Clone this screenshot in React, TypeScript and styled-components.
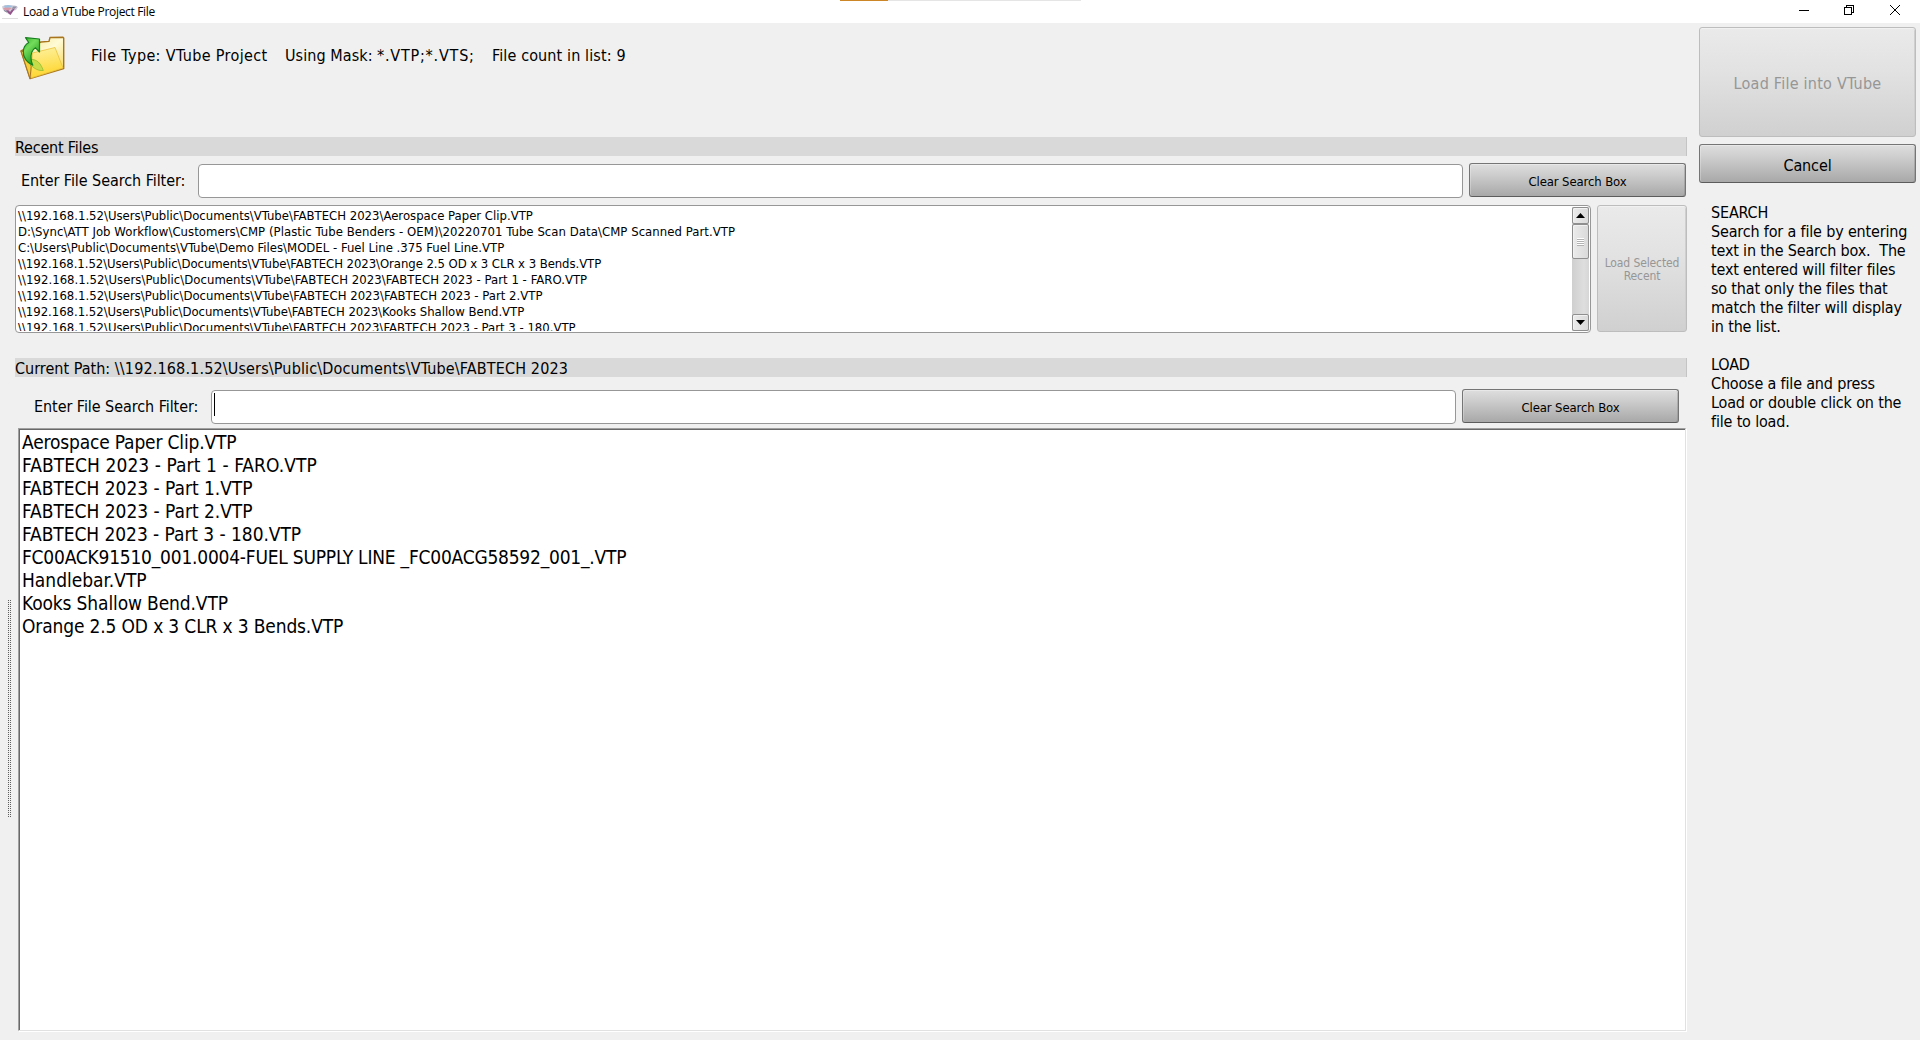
import React from "react";
import styled, { createGlobalStyle, css } from "styled-components";

const GlobalStyle = createGlobalStyle`
  * { box-sizing: border-box; }
  body {
    margin: 0;
    background: #f0f0f0;
    color: #000;
    font-family: "DejaVu Sans Condensed", "DejaVu Sans", sans-serif;
    font-size: 16px;
    overflow: hidden;
  }
`;

const Window = styled.div`
  width: 1920px;
  height: 1040px;
  display: flex;
  flex-direction: column;
  background: #f0f0f0;
`;

const TitleBar = styled.header`
  position: relative;
  height: 23px;
  flex: none;
  display: flex;
  align-items: center;
  justify-content: space-between;
  background: #fff;
`;

const TitleGroup = styled.div`
  display: flex;
  align-items: center;
  gap: 5px;
  padding-left: 2px;
`;

const Title = styled.span`
  font-family: "Open Sans", sans-serif;
  font-size: 12px;
  line-height: 18px;
  letter-spacing: -0.32px;
  padding-top: 1px;
`;

const Progress = styled.div`
  position: absolute;
  top: 0;
  left: 840px;
  width: 241px;
  height: 1px;
  background: linear-gradient(to right, #cc8527 48px, #e5e5e5 48px);
`;

const WindowControls = styled.div`
  display: flex;
  gap: 35px;
  padding: 0 19px 3px 0;
`;

const Body = styled.main`
  flex: 1;
  display: flex;
  min-height: 0;
`;

const SplitterRail = styled.div`
  width: 15px;
  flex: none;
  padding: 577px 0 0 8px;
`;

const Grip = styled.div`
  width: 3px;
  height: 217px;
  background: repeating-linear-gradient(to bottom, transparent 0 1px, #f0f0f0 1px 2px),
    linear-gradient(to right, #5e5e5e 1px, #f0f0f0 1px 2px, #5e5e5e 2px);
`;

const MainColumn = styled.section`
  width: 1672px;
  flex: none;
  display: flex;
  flex-direction: column;
`;

const InfoBar = styled.div`
  height: 114px;
  flex: none;
  display: flex;
  align-items: flex-start;
  padding: 13px 0 0 4px;
`;

const InfoLine = styled.div`
  display: flex;
  padding: 10px 0 0 26px;
  line-height: 19px;
  white-space: pre;
`;

const InfoItem = styled.span<{ $width: number; $spacing: number }>`
  width: ${(p) => p.$width}px;
  letter-spacing: ${(p) => p.$spacing}px;
`;

const SectionHeading = styled.h2<{ $spacing: number }>`
  margin: 0;
  height: 19px;
  flex: none;
  padding-top: 1px;
  font-size: 16px;
  font-weight: 400;
  line-height: 19px;
  letter-spacing: ${(p) => p.$spacing}px;
  background: #d9d9d9;
  border-right: 1px solid #c4c4c4;
  white-space: pre;
`;

const PathValue = styled.span`
  letter-spacing: 0.15px;
`;

const FilterRow = styled.div<{ $indent: number; $top: number; $right: number }>`
  display: flex;
  flex: none;
  height: 35px;
  margin: ${(p) => p.$top}px ${(p) => p.$right}px 0 ${(p) => p.$indent}px;
`;

const FilterLabel = styled.label`
  width: 178px;
  flex: none;
  line-height: 19px;
  padding: 8px 0 0 1px;
  letter-spacing: -0.06px;
`;

const FilterInput = styled.div`
  flex: 1;
  height: 34px;
  margin: 1px 6px 0 0;
  background: #fff;
  border: 1px solid #979797;
  border-radius: 4px;
  padding: 2px;
`;

const Caret = styled.div`
  width: 1px;
  height: 23px;
  background: #000;
`;

const raised = css`
  border: 1px solid #757575;
  border-bottom-color: #5c5c5c;
  border-radius: 3px;
  color: #000;
  background: linear-gradient(to bottom, #dedede, #cfcfcf 30%, #a8a8a8);
  box-shadow: inset 0 1px 0 #e8e8e8, inset 1px 0 0 rgba(255, 255, 255, 0.25),
    inset -1px 0 0 rgba(120, 120, 120, 0.35);
`;

const flat = css`
  border: 1px solid #bdbdbd;
  border-radius: 3px;
  color: #969696;
  background: linear-gradient(to bottom, #eaeaea, #e2e2e2 40%, #d0d0d0);
  box-shadow: inset 0 1px 0 #f1f1f1, inset -1px 0 0 #cfcfcf;
`;

const PushButton = styled.button<{ $size: number; $w: number; $h: number; $pad?: number; $ls?: number }>`
  flex: none;
  width: ${(p) => p.$w}px;
  height: ${(p) => p.$h}px;
  padding: ${(p) => p.$pad ?? 0}px 0 0;
  font-family: inherit;
  font-size: ${(p) => p.$size}px;
  line-height: ${(p) => (p.$size > 14 ? 19 : 13)}px;
  letter-spacing: ${(p) => p.$ls ?? -0.11}px;
  ${raised}
  &:disabled {
    ${flat}
  }
`;

const RecentRow = styled.div`
  display: flex;
  flex: none;
  gap: 6px;
  margin-top: 7px;
`;

const RecentBox = styled.div`
  width: 1576px;
  height: 128px;
  flex: none;
  display: flex;
  background: #fff;
  border: 1px solid #979797;
  border-radius: 4px;
  padding: 1px;
`;

const RecentList = styled.ul`
  flex: 1;
  height: 124px;
  margin: 0;
  padding: 0 0 0 1px;
  overflow: hidden;
  list-style: none;
  font-size: 13px;
`;

const RecentItem = styled.li<{ $spacing: number }>`
  height: 16px;
  line-height: 17px;
  white-space: pre;
  letter-spacing: ${(p) => p.$spacing}px;
`;

const ScrollBar = styled.div`
  width: 17px;
  height: 124px;
  display: flex;
  flex-direction: column;
  background: linear-gradient(to right, #cfcfcf, #dedede 70%, #d6d6d6);
`;

const ScrollPart = styled.div<{ $h: number }>`
  height: ${(p) => p.$h}px;
  display: flex;
  align-items: center;
  justify-content: center;
  background: linear-gradient(to right, #ebebeb, #dadada);
  border: 1px solid #8f8f8f;
  border-radius: 2px;
  box-shadow: inset 1px 1px 0 #f2f2f2;
`;

const ScrollTrack = styled.div`
  flex: 1;
`;

const CurrentPath = styled.div`
  margin-top: 25px;
`;

const FileBox = styled.ul`
  flex: 1;
  margin: 4px 1px 9px 3px;
  padding: 2px 0 0 3px;
  list-style: none;
  background: #fff;
  border: 1px solid;
  border-color: #a0a0a0 #e1e1e1 #e1e1e1 #a0a0a0;
  box-shadow: inset 1px 1px 0 #696969, 1px 1px 0 #fff;
  font-size: 19px;
`;

const FileItem = styled.li<{ $spacing: number }>`
  height: 23px;
  line-height: 23px;
  white-space: pre;
  letter-spacing: ${(p) => p.$spacing}px;
`;

const SidePanel = styled.aside`
  display: flex;
  flex-direction: column;
  gap: 7px;
  padding: 4px 0 0 12px;
`;

const HelpText = styled.div`
  display: flex;
  flex-direction: column;
  gap: 19px;
  padding: 13px 0 0 12px;
`;

const HelpBlock = styled.div`
  line-height: 19px;
  white-space: pre;
`;

const HelpLine = styled.div`
  letter-spacing: -0.17px;
`;

const AppIcon = () => (
  <svg width="16" height="16" viewBox="0 0 16 16">
    <path d="M0 2.500 3 1l10 .5 3 1.500-2 3-3 1-2.500 4L5 9 1 6Z" fill="#cfcbd8" />
    <path d="m2 2 4-1 5 1-3 1.500-5 .5Z" fill="#9cc0de" />
    <path d="m11 2.500 4 0-2 2-3 .5Z" fill="#8d93a3" />
    <path d="m1 4 5-.5 4 .5-3 2-4 .5Z" fill="#d99aa8" />
    <path d="m4 6 3 .5L8 8l2-2.500 3-1L8.500 11 6 9Z" fill="#96548c" />
    <path d="M2 6.500 5 8" stroke="#7c8494" />
    <path d="M0 14.500h16" stroke="#dedede" />
  </svg>
);

const FolderIcon = () => (
  <svg width="46" height="44" viewBox="0 0 46 44">
    <defs>
      <linearGradient id="folderBack" x1="0" y1="0" x2="1" y2="1">
        <stop offset="0" stopColor="#f6e288" />
        <stop offset=".5" stopColor="#fffbd6" />
        <stop offset="1" stopColor="#f6cf3a" />
      </linearGradient>
      <linearGradient id="folderFront" x1=".4" y1="0" x2=".6" y2="1">
        <stop offset="0" stopColor="#fdf09a" />
        <stop offset="1" stopColor="#ffd426" />
      </linearGradient>
      <linearGradient id="arrowFill" x1="0" y1="0" x2=".6" y2="1">
        <stop offset="0" stopColor="#2fae25" />
        <stop offset=".4" stopColor="#74dc5c" />
        <stop offset="1" stopColor="#1a9418" />
      </linearGradient>
    </defs>
    <path d="M11 42.500 2 15l4-2 16-7 8-.6 1-3.900 13-.2.7.7V32.500L11 42.500Z" fill="url(#folderBack)" stroke="#a8741c" strokeWidth="1.400" strokeLinejoin="round" />
    <path d="m12 42 1.500-25L36 11.500 44 32 12 42Z" fill="url(#folderFront)" stroke="#eac23c" strokeWidth=".8" strokeLinejoin="round" />
    <path d="m2 15 9 27.500 1.200-12L6 16Z" fill="#f5cd3a" stroke="#a8741c" strokeLinejoin="round" />
    <path d="M8.500 24c6-1.500 12-.5 15.800 10.500-6 .6-11.800-3-15.800-10.500Z" fill="#c6dc48" stroke="#93bd30" strokeWidth=".8" />
    <path d="M6.500 1.700 20.500 3v13l-4-4.200c-3.800 2.200-5 6.200-4.300 12.200.2 2 .8 3.500 1.600 5.200C8 27 3.800 21.500 4.300 15c.3-4 2.200-6.500 5.400-8.500L6.500 1.700Z" fill="url(#arrowFill)" stroke="#14801c" strokeWidth="1.200" strokeLinejoin="round" />
  </svg>
);

const recentFiles: [string, number][] = [
  ["\\\\192.168.1.52\\Users\\Public\\Documents\\VTube\\FABTECH 2023\\Aerospace Paper Clip.VTP", 0],
  ["D:\\Sync\\ATT Job Workflow\\Customers\\CMP (Plastic Tube Benders - OEM)\\20220701 Tube Scan Data\\CMP Scanned Part.VTP", 0.052],
  ["C:\\Users\\Public\\Documents\\VTube\\Demo Files\\MODEL - Fuel Line .375 Fuel Line.VTP", 0],
  ["\\\\192.168.1.52\\Users\\Public\\Documents\\VTube\\FABTECH 2023\\Orange 2.5 OD x 3 CLR x 3 Bends.VTP", -0.06],
  ["\\\\192.168.1.52\\Users\\Public\\Documents\\VTube\\FABTECH 2023\\FABTECH 2023 - Part 1 - FARO.VTP", 0.04],
  ["\\\\192.168.1.52\\Users\\Public\\Documents\\VTube\\FABTECH 2023\\FABTECH 2023 - Part 2.VTP", 0.01],
  ["\\\\192.168.1.52\\Users\\Public\\Documents\\VTube\\FABTECH 2023\\Kooks Shallow Bend.VTP", -0.025],
  ["\\\\192.168.1.52\\Users\\Public\\Documents\\VTube\\FABTECH 2023\\FABTECH 2023 - Part 3 - 180.VTP", 0],
];

const files: [string, number][] = [
  ["Aerospace Paper Clip.VTP", -0.17],
  ["FABTECH 2023 - Part 1 - FARO.VTP", 0.07],
  ["FABTECH 2023 - Part 1.VTP", -0.03],
  ["FABTECH 2023 - Part 2.VTP", -0.03],
  ["FABTECH 2023 - Part 3 - 180.VTP", -0.06],
  ["FC00ACK91510_001.0004-FUEL SUPPLY LINE _FC00ACG58592_001_.VTP", -0.22],
  ["Handlebar.VTP", -0.01],
  ["Kooks Shallow Bend.VTP", -0.13],
  ["Orange 2.5 OD x 3 CLR x 3 Bends.VTP", -0.15],
];

const searchHelp = [
  "SEARCH",
  "Search for a file by entering",
  "text in the Search box.  The",
  "text entered will filter files",
  "so that only the files that",
  "match the filter will display",
  "in the list.",
];

const loadHelp = ["LOAD", "Choose a file and press", "Load or double click on the", "file to load."];

export default function App() {
  return (
    <>
      <GlobalStyle />
      <Window>
        <TitleBar>
          <TitleGroup>
            <AppIcon />
            <Title>Load a VTube Project File</Title>
          </TitleGroup>
          <Progress />
          <WindowControls>
            <svg width="10" height="12" viewBox="0 0 10 12" shapeRendering="crispEdges">
              <path d="M0 6.500h10" stroke="#000" />
            </svg>
            <svg width="10" height="12" viewBox="0 0 10 12" fill="none" stroke="#000" shapeRendering="crispEdges">
              <path d="M.5 3.500h7v7h-7zM2.500 3.500v-2h7v7h-2" />
            </svg>
            <svg width="12" height="12" viewBox="0 0 12 12" stroke="#000">
              <path d="m1 1 10 10M11 1 1 11" />
            </svg>
          </WindowControls>
        </TitleBar>
        <Body>
          <SplitterRail>
            <Grip />
          </SplitterRail>
          <MainColumn>
            <InfoBar>
              <FolderIcon />
              <InfoLine>
                <InfoItem $width={194} $spacing={0.36}>File Type: VTube Project</InfoItem>
                <InfoItem $width={92} $spacing={0.07}>Using Mask:</InfoItem>
                <InfoItem $width={115} $spacing={0.78}>*.VTP;*.VTS;</InfoItem>
                <InfoItem $width={140} $spacing={0.12}>File count in list: 9</InfoItem>
              </InfoLine>
            </InfoBar>
            <SectionHeading $spacing={-0.2}>Recent Files</SectionHeading>
            <FilterRow $top={7} $indent={5} $right={1}>
              <FilterLabel>Enter File Search Filter:</FilterLabel>
              <FilterInput />
              <PushButton $size={13} $w={217} $h={34} $pad={3}>Clear Search Box</PushButton>
            </FilterRow>
            <RecentRow>
              <RecentBox>
                <RecentList>
                  {recentFiles.map(([name, spacing]) => (
                    <RecentItem key={name} $spacing={spacing}>{name}</RecentItem>
                  ))}
                </RecentList>
                <ScrollBar>
                  <ScrollPart $h={17}>
                    <svg width="9" height="5" viewBox="0 0 9 5"><path d="M4.500 0 9 5H0Z" /></svg>
                  </ScrollPart>
                  <ScrollPart $h={35}>
                    <svg width="7" height="8" viewBox="0 0 7 8" shapeRendering="crispEdges">
                      <path d="M0 .5h7M0 2.500h7M0 4.500h7M0 6.500h7" stroke="#fff" />
                      <path d="M0 1.500h7M0 3.500h7M0 5.500h7M0 7.500h7" stroke="#b2b2b2" />
                    </svg>
                  </ScrollPart>
                  <ScrollTrack />
                  <ScrollPart $h={17}>
                    <svg width="9" height="5" viewBox="0 0 9 5"><path d="M4.500 5 9 0H0Z" /></svg>
                  </ScrollPart>
                </ScrollBar>
              </RecentBox>
              <PushButton $size={12} $w={90} $h={127} $pad={2} disabled>
                Load Selected
                <br />
                Recent
              </PushButton>
            </RecentRow>
            <CurrentPath>
              <SectionHeading $spacing={0.02}>
                {"Current Path: "}
                <PathValue>{"\\\\192.168.1.52\\Users\\Public\\Documents\\VTube\\FABTECH 2023"}</PathValue>
              </SectionHeading>
            </CurrentPath>
            <FilterRow $top={12} $indent={18} $right={8}>
              <FilterLabel>Enter File Search Filter:</FilterLabel>
              <FilterInput>
                <Caret />
              </FilterInput>
              <PushButton $size={13} $w={217} $h={34} $pad={3}>Clear Search Box</PushButton>
            </FilterRow>
            <FileBox>
              {files.map(([name, spacing]) => (
                <FileItem key={name} $spacing={spacing}>{name}</FileItem>
              ))}
            </FileBox>
          </MainColumn>
          <SidePanel>
            <PushButton $size={16} $w={217} $h={110} $pad={2} $ls={0.24} disabled>Load File into VTube</PushButton>
            <PushButton $size={16} $w={217} $h={39} $pad={4}>Cancel</PushButton>
            <HelpText>
              <HelpBlock>
                {searchHelp.map((line) => <HelpLine key={line}>{line}</HelpLine>)}
              </HelpBlock>
              <HelpBlock>
                {loadHelp.map((line) => <HelpLine key={line}>{line}</HelpLine>)}
              </HelpBlock>
            </HelpText>
          </SidePanel>
        </Body>
      </Window>
    </>
  );
}
